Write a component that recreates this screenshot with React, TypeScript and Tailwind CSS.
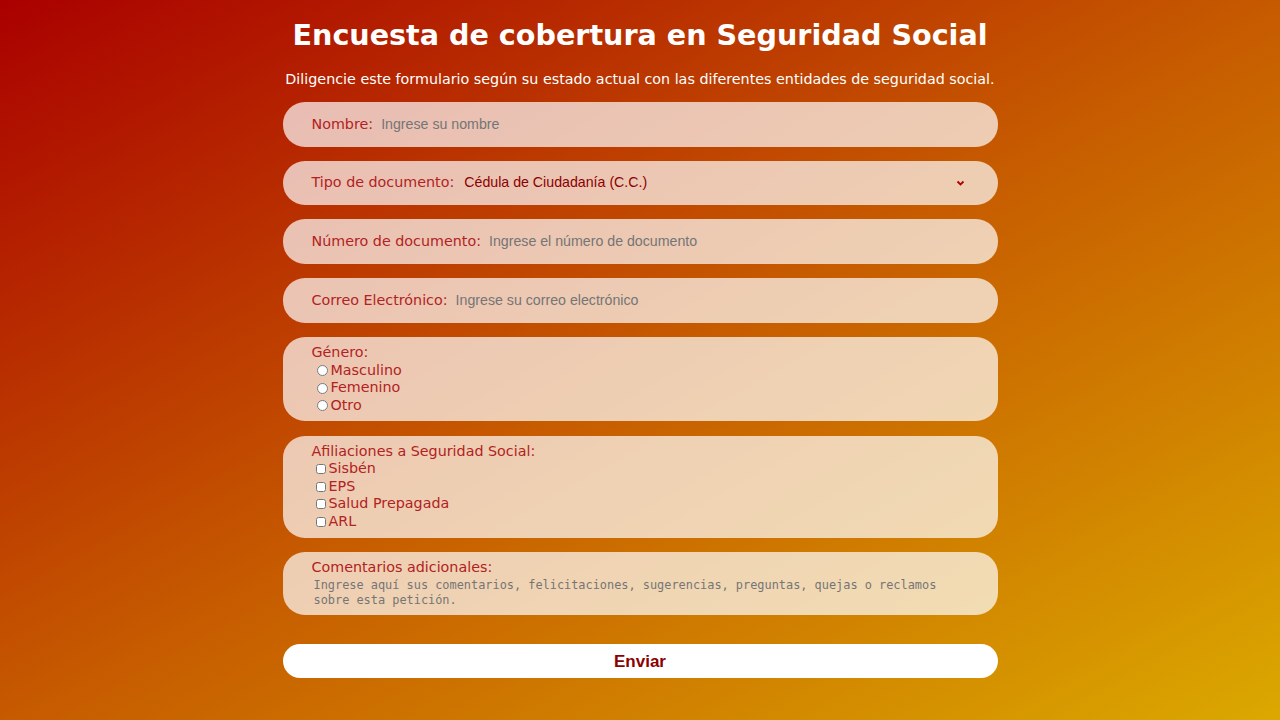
import { useState } from "react";

const sans = "font-['DejaVu_Sans',sans-serif]";

const Field = ({ label, placeholder }: { label: string; placeholder: string }) => (
  <div className="flex h-[44.7px] items-center rounded-[22px] bg-white/70 pl-[29px] pr-[22px]">
    <label className={`${sans} text-[14.3px] text-[#b22222]`}>{label}</label>
    <input
      placeholder={placeholder}
      className="ml-[8px] flex-1 bg-transparent font-['Liberation_Sans',Arial,sans-serif] text-[14.2px] text-[#333] outline-none placeholder:text-[#757575]"
    />
  </div>
);

export default function App() {
  const [gender, setGender] = useState("");

  return (
    <div className="min-h-[720px] w-full bg-[linear-gradient(to_bottom_right,#aa0000,#c65a00_50%,#dba800)] pt-[18px]">
      <div className="mx-auto w-[715px]">
        <h1 className={`${sans} whitespace-nowrap text-center text-[28.6px] font-bold leading-[34px] text-white`}>
          Encuesta de cobertura en Seguridad Social
        </h1>
        <p className={`${sans} mt-[18.5px] whitespace-nowrap text-center text-[14.3px] leading-[17.5px] text-white`}>
          Diligencie este formulario según su estado actual con las diferentes entidades de seguridad social.
        </p>

        <form className="mt-[14px] flex flex-col gap-[14px]" onSubmit={(e) => e.preventDefault()}>
          <Field label="Nombre:" placeholder="Ingrese su nombre" />

          <div className="flex h-[44.7px] items-center rounded-[22px] bg-white/70 pl-[29px] pr-[22px]">
            <label className={`${sans} text-[14.3px] text-[#b22222]`}>Tipo de documento:</label>
            <div className="relative ml-[10px] flex flex-1 items-center">
              <select className="w-full appearance-none bg-transparent font-['Liberation_Sans',Arial,sans-serif] text-[14.2px] text-[#8b0000] outline-none">
                <option>Cédula de Ciudadanía (C.C.)</option>
                <option>Tarjeta de Identidad (T.I.)</option>
                <option>Cédula de Extranjería (C.E.)</option>
                <option>Pasaporte</option>
              </select>
              <svg className="pointer-events-none absolute right-[11px] top-1/2 -translate-y-1/2" width="9" height="6" viewBox="0 0 9 6">
                <path d="M1.5 1.5 L4.5 4.5 L7.5 1.5" fill="none" stroke="#b00000" strokeWidth="1.8" />
              </svg>
            </div>
          </div>

          <Field label="Número de documento:" placeholder="Ingrese el número de documento" />
          <Field label="Correo Electrónico:" placeholder="Ingrese su correo electrónico" />

          <div className={`${sans} rounded-[22px] bg-white/70 pb-[7px] pl-[29px] pt-[7.5px] text-[14.3px] leading-[17.5px] text-[#b22222]`}>
            <div>Género:</div>
            {["Masculino", "Femenino", "Otro"].map((g) => (
              <label key={g} className="flex items-center">
                <input
                  type="radio"
                  name="genero"
                  checked={gender === g}
                  onChange={() => setGender(g)}
                  className="ml-[5px] mr-[3px] h-[11px] w-[11px] accent-[#8b0000]"
                />
                {g}
              </label>
            ))}
          </div>

          <div className={`${sans} mt-[1px] rounded-[22px] bg-white/70 pb-[8px] pl-[29px] pt-[6.5px] text-[14.3px] leading-[17.5px] text-[#b22222]`}>
            <div>Afiliaciones a Seguridad Social:</div>
            {["Sisbén", "EPS", "Salud Prepagada", "ARL"].map((a) => (
              <label key={a} className="flex items-center">
                <input type="checkbox" className="ml-[4px] mr-[3px] h-[10px] w-[10px] accent-[#8b0000]" />
                {a}
              </label>
            ))}
          </div>

          <div className="rounded-[22px] bg-white/70 pb-[5px] pl-[29px] pt-[6.5px]">
            <label className={`${sans} block text-[14.3px] leading-[17.5px] text-[#b22222]`}>Comentarios adicionales:</label>
            <textarea
              rows={2}
              placeholder="Ingrese aquí sus comentarios, felicitaciones, sugerencias, preguntas, quejas o reclamos sobre esta petición."
              className="mt-[2px] block h-[32px] w-[650px] resize-none bg-transparent px-[2px] font-['DejaVu_Sans_Mono',monospace] text-[11.9px] leading-[15px] outline-none placeholder:text-[#757575]"
            />
          </div>

          <button
            type="submit"
            className="mt-[15px] h-[34px] rounded-full bg-white font-['Liberation_Sans',Arial,sans-serif] text-[17px] font-bold text-[#8b0000]"
          >
            Enviar
          </button>
        </form>
      </div>
    </div>
  );
}
